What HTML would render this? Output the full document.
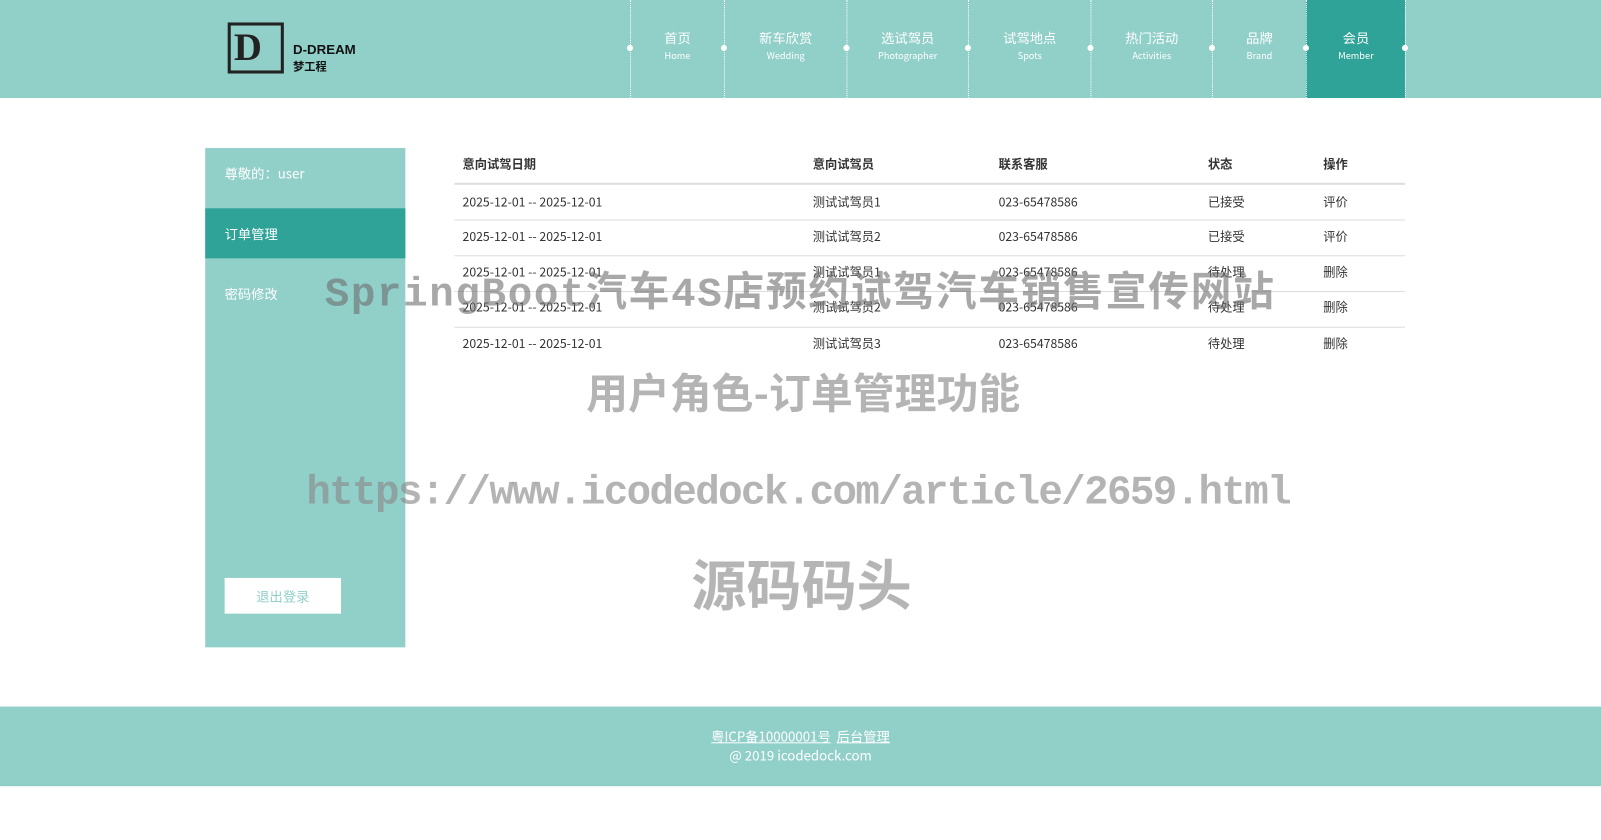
<!DOCTYPE html>
<html><head><meta charset="utf-8"><style>
*{margin:0;padding:0;box-sizing:border-box}
body{width:1601px;height:840px;position:relative;background:#fff;font-family:"Liberation Sans","Noto Sans CJK SC",sans-serif;overflow:hidden}
#w{position:absolute;left:0;top:0;width:1568px;height:823px;transform:scale(1.02105);transform-origin:0 0}
.hd{position:absolute;left:0;top:0;width:1568px;height:96px;background:#91cfc9}
.nav{position:absolute;top:0;height:96px;text-align:center;color:#fff;font-family:"Noto Sans CJK SC",sans-serif}
.nav .c{position:absolute;top:28px;left:0;right:0;font-size:13px;line-height:18px}
.nav .e{position:absolute;top:49px;left:0;right:0;font-size:9px;line-height:12px}
.dl{position:absolute;top:0;height:96px;border-left:1px dotted #fff}
.dot{position:absolute;top:44px;width:6px;height:6px;border-radius:50%;background:#fff}
.side{position:absolute;left:201px;top:145px;width:196px;height:489px;background:#91cfc9;color:#fff;font-size:13px;font-family:"Noto Sans CJK SC",sans-serif}
.t{position:absolute;font-size:12px;line-height:16px;color:#333;font-family:"Noto Sans CJK SC",sans-serif}
.hl{position:absolute;left:445px;width:931px;height:1px;background:#ddd}
.wm{position:absolute;font-weight:bold;white-space:nowrap}
.ft{position:absolute;left:0;top:692px;width:1568px;height:78px;background:#91cfc9;color:#fff;font-size:13px;text-align:center;font-family:"Noto Sans CJK SC",sans-serif;line-height:18px}
</style></head><body><div id="w">
<div class="hd">
<div style="position:absolute;left:223px;top:22px;width:55px;height:50px;border:3px solid #222"></div>
<div style="position:absolute;left:229px;top:25px;font:bold 38px 'Liberation Serif',serif;color:#222">D</div>
<div style="position:absolute;left:287px;top:41px;font:bold 13px 'Liberation Sans',sans-serif;color:#111">D-DREAM</div>
<div style="position:absolute;left:287px;top:57px;font:bold 11px 'Noto Sans CJK SC',sans-serif;color:#111">梦工程</div>
<div style="position:absolute;left:1279px;top:0;width:97px;height:96px;background:#2fa397"></div>
<div class="dl" style="left:617px"></div><div class="dl" style="left:709px"></div><div class="dl" style="left:829px"></div><div class="dl" style="left:948px"></div><div class="dl" style="left:1068px"></div><div class="dl" style="left:1187px"></div><div class="dl" style="left:1279px"></div><div class="dl" style="left:1376px"></div>
<div class="dot" style="left:614px"></div><div class="dot" style="left:706px"></div><div class="dot" style="left:826px"></div><div class="dot" style="left:945px"></div><div class="dot" style="left:1065px"></div><div class="dot" style="left:1184px"></div><div class="dot" style="left:1276px"></div><div class="dot" style="left:1373px"></div>
<div class="nav" style="left:618px;width:91px"><div class="c">首页</div><div class="e">Home</div></div>
<div class="nav" style="left:710px;width:119px"><div class="c">新车欣赏</div><div class="e">Wedding</div></div>
<div class="nav" style="left:830px;width:118px"><div class="c">选试驾员</div><div class="e">Photographer</div></div>
<div class="nav" style="left:949px;width:119px"><div class="c">试驾地点</div><div class="e">Spots</div></div>
<div class="nav" style="left:1069px;width:118px"><div class="c">热门活动</div><div class="e">Activities</div></div>
<div class="nav" style="left:1188px;width:91px"><div class="c">品牌</div><div class="e">Brand</div></div>
<div class="nav" style="left:1280px;width:96px"><div class="c">会员</div><div class="e">Member</div></div>
</div>
<div class="side">
<div style="position:absolute;left:19px;top:15px">尊敬的：user</div>
<div style="position:absolute;left:0;top:59px;width:196px;height:49px;background:#2fa397"></div>
<div style="position:absolute;left:19px;top:74px">订单管理</div>
<div style="position:absolute;left:19px;top:133px">密码修改</div>
<div style="position:absolute;left:19px;top:421px;width:114px;height:35px;background:#fff;color:#91cfc9;text-align:center;line-height:35px">退出登录</div>
</div>
<div class="t" style="left:453px;top:153px;font-weight:bold">意向试驾日期</div>
<div class="t" style="left:796px;top:153px;font-weight:bold">意向试驾员</div>
<div class="t" style="left:978px;top:153px;font-weight:bold">联系客服</div>
<div class="t" style="left:1183px;top:153px;font-weight:bold">状态</div>
<div class="t" style="left:1296px;top:153px;font-weight:bold">操作</div>
<div class="hl" style="top:179px;height:2px"></div>
<div class="hl" style="top:215px"></div><div class="hl" style="top:250px"></div><div class="hl" style="top:285px"></div><div class="hl" style="top:320px"></div>
<div class="t" style="left:453px;top:190px">2025-12-01 -- 2025-12-01</div><div class="t" style="left:796px;top:190px">测试试驾员1</div><div class="t" style="left:978px;top:190px">023-65478586</div><div class="t" style="left:1183px;top:190px">已接受</div><div class="t" style="left:1296px;top:190px">评价</div>
<div class="t" style="left:453px;top:224px">2025-12-01 -- 2025-12-01</div><div class="t" style="left:796px;top:224px">测试试驾员2</div><div class="t" style="left:978px;top:224px">023-65478586</div><div class="t" style="left:1183px;top:224px">已接受</div><div class="t" style="left:1296px;top:224px">评价</div>
<div class="t" style="left:453px;top:259px">2025-12-01 -- 2025-12-01</div><div class="t" style="left:796px;top:259px">测试试驾员1</div><div class="t" style="left:978px;top:259px">023-65478586</div><div class="t" style="left:1183px;top:259px">待处理</div><div class="t" style="left:1296px;top:259px">删除</div>
<div class="t" style="left:453px;top:293px">2025-12-01 -- 2025-12-01</div><div class="t" style="left:796px;top:293px">测试试驾员2</div><div class="t" style="left:978px;top:293px">023-65478586</div><div class="t" style="left:1183px;top:293px">待处理</div><div class="t" style="left:1296px;top:293px">删除</div>
<div class="t" style="left:453px;top:329px">2025-12-01 -- 2025-12-01</div><div class="t" style="left:796px;top:329px">测试试驾员3</div><div class="t" style="left:978px;top:329px">023-65478586</div><div class="t" style="left:1183px;top:329px">待处理</div><div class="t" style="left:1296px;top:329px">删除</div>
<div class="wm" style="left:318px;top:253px;font:bold 40px 'Liberation Mono','Noto Sans CJK SC',monospace;color:rgba(110,110,110,.6);letter-spacing:1.6px">SpringBoot汽车4S店预约试驾汽车销售宣传网站</div>
<div class="wm" style="left:574px;top:357px;font:bold 41px 'Noto Sans CJK SC',sans-serif;color:rgba(130,130,130,.6);line-height:50px">用户角色-订单管理功能</div>
<div class="wm" style="left:300px;top:461px;font:bold 40px 'Liberation Mono',monospace;color:rgba(140,140,140,.65);letter-spacing:-1.6px">https://www.icodedock.com/article/2659.html</div>
<div class="wm" style="left:677px;top:538px;font:bold 54px 'Noto Sans CJK SC',sans-serif;color:rgba(150,150,150,.7);line-height:64px">源码码头</div>
<div class="ft"><div style="position:absolute;top:20px;left:0;right:0"><u>粤ICP备10000001号</u>&nbsp;&nbsp;<u>后台管理</u></div><div style="position:absolute;top:39px;left:0;right:0">@ 2019 icodedock.com</div></div>
</div></body></html>
